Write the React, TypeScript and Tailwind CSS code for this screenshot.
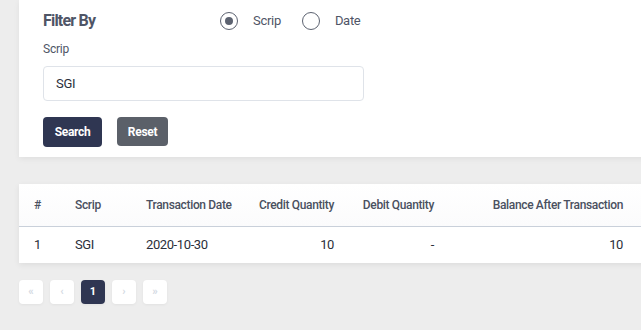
import React from "react";

const cols = "grid grid-cols-[41px_71px_113px_105px_100px_189px]";

const Radio = ({ checked, label }: { checked?: boolean; label: string }) => (
  <label className="flex items-center gap-[15px]">
    <span className="w-[18px] h-[18px] rounded-full border-[1.5px] border-[#5c6270] flex items-center justify-center">
      {checked && <span className="w-[8px] h-[8px] rounded-full bg-[#5c6270]" />}
    </span>
    <span className="text-[13px] tracking-[-0.3px] text-[#4f5566]">{label}</span>
  </label>
);

const PageBtn = ({ children, active }: { children: React.ReactNode; active?: boolean }) => (
  <div
    className={`w-[24px] h-[24px] rounded-[4px] flex items-center justify-center text-[11px] font-bold shadow-[0_1px_3px_rgba(0,0,0,0.05)] ${
      active ? "bg-[#2f3652] text-white" : "bg-white text-[#d3d9e2]"
    }`}
  >
    {children}
  </div>
);

export default function App() {
  return (
    <div className="w-[641px] h-[330px] overflow-hidden bg-[#ededed] pl-[19px] font-['Roboto',sans-serif]">
      <div className="bg-white w-[640px] h-[157px] pl-[24px] pt-[11px] shadow-[0_2px_6px_rgba(0,0,0,0.06)]">
        <div className="flex items-center h-[20px]">
          <h2 className="text-[16px] font-bold tracking-[-0.8px] text-[#4f5566] w-[177px]">Filter By</h2>
          <div className="flex items-center gap-[21px]">
            <Radio checked label="Scrip" />
            <Radio label="Date" />
          </div>
        </div>
        <div className="text-[12px] tracking-[-0.2px] text-[#4f5566] mt-[9px]">Scrip</div>
        <div className="mt-[8px] w-[321px] h-[35px] border border-[#dfe3e9] rounded-[4px] flex items-center pl-[12px] text-[13px] tracking-[-0.3px] text-[#2b2f3a]">
          SGI
        </div>
        <div className="flex gap-[15px] mt-[16px]">
          <button className="w-[59px] h-[30px] rounded-[4px] bg-[#2f3652] text-white text-[12px] tracking-[-0.3px] font-bold">
            Search
          </button>
          <button className="w-[51px] h-[29px] rounded-[4px] bg-[#5b6069] text-white text-[12px] tracking-[-0.3px] font-bold">
            Reset
          </button>
        </div>
      </div>

      <div className="mt-[27px] bg-white w-[640px] shadow-[0_2px_6px_rgba(0,0,0,0.07)]">
        <div className={`${cols} h-[43px] items-center text-[12px] font-medium tracking-[-0.35px] text-[#4a5060] border-b border-[#c9d0da] bg-gradient-to-b from-white to-[#fbfbfc]`}>
          <div className="pl-[15px]">#</div>
          <div className="pl-[15px]">Scrip</div>
          <div className="pl-[15px]">Transaction Date</div>
          <div className="pr-[15px] text-right">Credit Quantity</div>
          <div className="pr-[15px] text-right">Debit Quantity</div>
          <div className="pr-[15px] text-right">Balance After Transaction</div>
        </div>
        <div className={`${cols} h-[36px] items-center text-[13px] tracking-[-0.4px] text-[#2b2f3a]`}>
          <div className="pl-[15px]">1</div>
          <div className="pl-[15px]">SGI</div>
          <div className="pl-[15px]">2020-10-30</div>
          <div className="pr-[15px] text-right">10</div>
          <div className="pr-[15px] text-right">-</div>
          <div className="pr-[15px] text-right">10</div>
        </div>
      </div>

      <div className="flex gap-[7px] mt-[17px]">
        <PageBtn>«</PageBtn>
        <PageBtn>‹</PageBtn>
        <PageBtn active>1</PageBtn>
        <PageBtn>›</PageBtn>
        <PageBtn>»</PageBtn>
      </div>
    </div>
  );
}
